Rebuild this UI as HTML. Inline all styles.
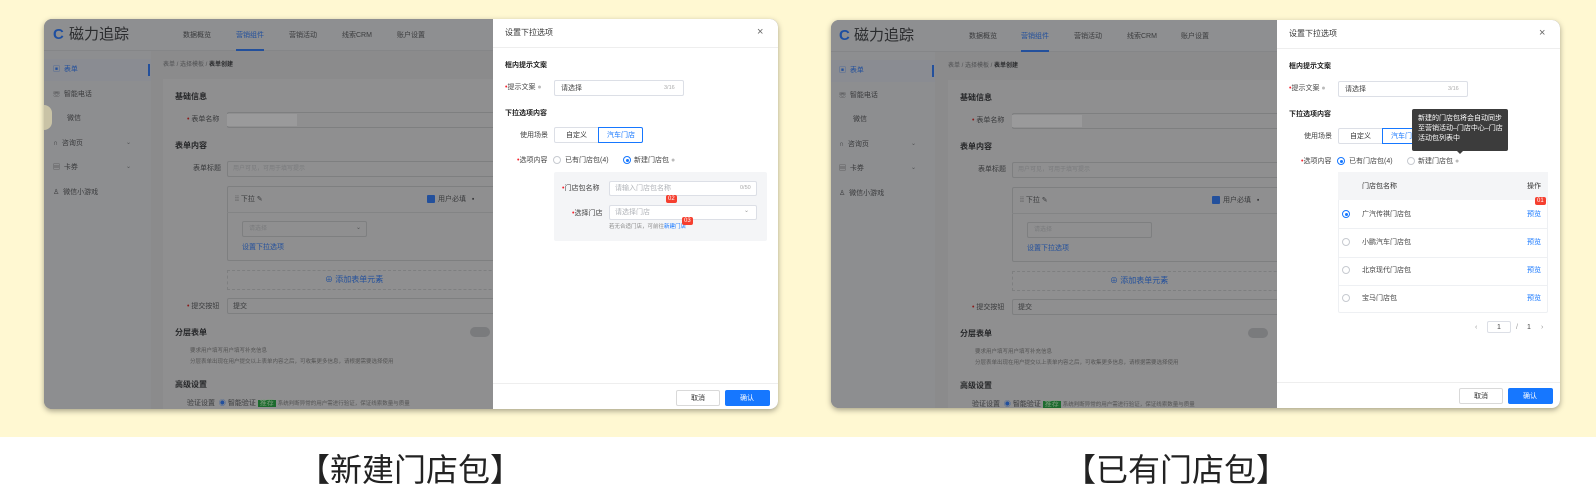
<!DOCTYPE html>
<html><head><meta charset="utf-8">
<style>
*{box-sizing:border-box;margin:0;padding:0}
body{width:1596px;height:503px;background:#fff;position:relative;overflow:hidden;font-family:"Liberation Sans","Noto Sans CJK SC",sans-serif;}
.yel{position:absolute;left:0;top:0;width:1596px;height:437px;background:#fff8d2}
.win{position:absolute;border-radius:8px;overflow:hidden;background:#8b8b8c;box-shadow:0 2px 6px rgba(0,0,0,.35)}
.a{position:absolute;white-space:nowrap;line-height:1}
.hd{position:absolute;left:0;top:0;right:0;height:32px;background:#8e8f91;border-bottom:1px solid #858688}
.sb{position:absolute;left:0;top:32px;width:107px;bottom:0;background:#8d8e90}
.ct{position:absolute;left:119px;top:60px;right:0;bottom:0;background:#8f8f90}
.inp{position:absolute;border:1px solid #7e7f80;border-radius:2px;background:#8f8f90}
.t7{font-size:7px;color:#3a3b3d}
.t6{font-size:6px;color:#505153}
.b8{font-size:8px;font-weight:bold;color:#262729}
.blue{color:#23509c}
.dr{position:absolute;top:0;bottom:0;background:#fff}
.dr .t{font-size:8px;color:#333}
.lbl{font-size:7px;color:#444}
.req{color:#f5222d}
.di{position:absolute;border:1px solid #dcdfe6;border-radius:2px;background:#fff}
.ph{font-size:7px;color:#b0b3b8}
.badge{position:absolute;background:#f53f2f;color:#fff;font-size:6px;padding:1px 2px;border-radius:2px;line-height:1}
.rad{position:absolute;width:8px;height:8px;border:1px solid #c7cad0;border-radius:50%;background:#fff}
.rad.on{border-color:#1677ff}
.rad.on:after{content:"";position:absolute;left:1.5px;top:1.5px;width:3px;height:3px;border-radius:50%;background:#1677ff}
.cap{position:absolute;top:454px;font-size:32px;color:#222;font-family:"Liberation Sans","Noto Sans CJK SC",sans-serif;line-height:1}
</style></head><body>
<div class="yel"></div>

<!-- LEFT WINDOW -->
<div class="win" style="left:44px;top:19px;width:734px;height:390px">
 <div class="hd">
  <div class="a" style="left:9px;top:8px;font-size:15px;color:#1e4fa0;font-weight:bold">C</div>
  <div class="a" style="left:25px;top:8px;font-size:15px;color:#2a2b2d">磁力追踪</div>
  <div class="a t7" style="left:139px;top:13px">数据概览</div>
  <div class="a t7 blue" style="left:192px;top:13px">营销组件</div>
  <div style="position:absolute;left:192px;top:30px;width:28px;height:2px;background:#23509c"></div>
  <div class="a t7" style="left:245px;top:13px">营销活动</div>
  <div class="a t7" style="left:298px;top:13px">线索CRM</div>
  <div class="a t7" style="left:353px;top:13px">账户设置</div>
 </div>
 <div class="sb">
  <div style="position:absolute;left:0;top:8px;width:107px;height:22px;background:#8a8c92"></div>
  <div style="position:absolute;left:104px;top:13px;width:2px;height:12px;background:#23509c"></div>
  <div class="a t7 blue" style="left:9px;top:15px">▣ &nbsp;表单</div>
  <div class="a t7" style="left:9px;top:40px">☏ &nbsp;智能电话</div>
  <div class="a t7" style="left:23px;top:64px">微信</div>
  <div class="a t7" style="left:9px;top:89px">∩ &nbsp;咨询页</div>
  <div class="a t6" style="left:82px;top:89px">⌄</div>
  <div class="a t7" style="left:9px;top:113px">▤ &nbsp;卡券</div>
  <div class="a t6" style="left:82px;top:113px">⌄</div>
  <div class="a t7" style="left:9px;top:138px">♙ &nbsp;微信小游戏</div>
 </div>
 <div style="position:absolute;left:-6px;top:86px;width:14px;height:25px;background:#c9c3a6;border-radius:0 8px 8px 0"></div>
 <div class="a t6" style="left:119px;top:43px">表单 / 选择模板 / <b style="color:#2a2b2d">表单创建</b></div>
 <div class="ct">
  <div class="a b8" style="left:12px;top:14px">基础信息</div>
  <div class="a t7" style="left:24px;top:37px"><span class="req" style="color:#8a1a1a">•</span> 表单名称</div>
  <div class="inp" style="left:64px;top:33px;width:330px;height:16px"></div>
  <div style="position:absolute;left:64px;top:35px;width:70px;height:12px;background:#9a9a9b"></div>
  <div class="a b8" style="left:12px;top:63px">表单内容</div>
  <div class="a t7" style="left:30px;top:86px">表单标题</div>
  <div class="inp" style="left:64px;top:82px;width:330px;height:16px"></div>
  <div class="a t6" style="left:70px;top:87px;color:#7a7b7d">用户可见，可用于填写提示</div>
  <div class="inp" style="left:64px;top:107px;width:330px;height:75px"></div>
  <div class="a t7" style="left:72px;top:117px">⁞⁞ 下拉 ✎</div>
  <div style="position:absolute;left:264px;top:116px;width:8px;height:8px;background:#23509c;border-radius:1px"></div>
  <div class="a t7" style="left:275px;top:117px">用户必填 &nbsp;&nbsp;▪</div>
  <div style="position:absolute;left:64px;top:133px;width:330px;height:1px;background:#838485"></div>
  <div class="inp" style="left:79px;top:142px;width:125px;height:16px"></div>
  <div class="a t6" style="left:86px;top:147px;color:#7a7b7d">请选择</div>
  <div class="a t6" style="left:193px;top:146px">⌄</div>
  <div class="a t7 blue" style="left:79px;top:165px">设置下拉选项</div>
  <div style="position:absolute;left:64px;top:191px;width:330px;height:20px;border:1px dashed #7e7f80"></div>
  <div class="a t7 blue" style="left:162px;top:197px;font-size:8px">⊕ 添加表单元素</div>
  <div class="a t7" style="left:24px;top:224px"><span style="color:#8a1a1a">•</span> 提交按钮</div>
  <div class="inp" style="left:64px;top:219px;width:330px;height:16px"></div>
  <div class="a t7" style="left:70px;top:224px">提交</div>
  <div class="a b8" style="left:12px;top:250px">分层表单</div>
  <div style="position:absolute;left:307px;top:248px;width:20px;height:10px;border-radius:5px;background:#7a7b7d"></div>
  <div class="a" style="left:27px;top:270px;font-size:5.5px;color:#555">要求用户填写用户填写补充信息</div>
  <div class="a" style="left:27px;top:281px;font-size:5.5px;color:#555">分层表单出现在用户提交以上表单内容之后，可收集更多信息，请根据需要选择使用</div>
  <div class="a b8" style="left:12px;top:302px">高级设置</div>
  <div class="a t7" style="left:24px;top:321px">验证设置 &nbsp;<span class="blue">◉</span> 智能验证 <span style="background:#1d6b2e;color:#7a9a7a;padding:0 2px">推荐</span> <span style="font-size:5.5px;color:#555">系统判断异常的用户需进行验证，保证线索数量与质量</span></div>
 </div>
 <!-- drawer -->
 <div class="dr" style="left:449px;width:285px">
  <div class="a t" style="left:12px;top:10px">设置下拉选项</div>
  <div class="a" style="left:264px;top:8px;font-size:11px;color:#666">×</div>
  <div style="position:absolute;left:0;top:28px;width:285px;height:1px;background:#eee"></div>
  <div class="a lbl" style="left:12px;top:43px;font-weight:bold;color:#222">框内提示文案</div>
  <div class="a lbl" style="left:12px;top:65px"><span class="req">•</span>提示文案 <span style="color:#bbb">●</span></div>
  <div class="di" style="left:61px;top:61px;width:130px;height:16px"></div>
  <div class="a lbl" style="left:68px;top:66px">请选择</div>
  <div class="a" style="left:171px;top:67px;font-size:5.5px;color:#aaa">3/16</div>
  <div class="a lbl" style="left:12px;top:91px;font-weight:bold;color:#222">下拉选项内容</div>
  <div class="a lbl" style="left:27px;top:113px">使用场景</div>
  <div class="di" style="left:61px;top:108px;width:45px;height:16px;border-radius:2px 0 0 2px"></div>
  <div class="di" style="left:105px;top:108px;width:45px;height:16px;border-color:#1677ff;border-radius:0 2px 2px 0"></div>
  <div class="a lbl" style="left:73px;top:113px;color:#333">自定义</div>
  <div class="a lbl" style="left:114px;top:113px;color:#1677ff">汽车门店</div>
  <div class="a lbl" style="left:24px;top:138px"><span class="req">•</span>选项内容</div>
  <div class="rad" style="left:60px;top:137px"></div>
  <div class="a lbl" style="left:72px;top:138px">已有门店包(4)</div>
  <div class="rad on" style="left:130px;top:137px"></div>
  <div class="a lbl" style="left:141px;top:138px">新建门店包 <span style="color:#bbb">●</span></div>
  <div style="position:absolute;left:61px;top:153px;width:213px;height:69px;background:#f4f5f7;border-radius:2px"></div>
  <div class="a lbl" style="left:69px;top:166px"><span class="req">•</span>门店包名称</div>
  <div class="di" style="left:116px;top:162px;width:148px;height:15px"></div>
  <div class="a ph" style="left:122px;top:166px">请输入门店包名称</div>
  <div class="a" style="left:247px;top:167px;font-size:5.5px;color:#aaa">0/50</div>
  <div class="a lbl" style="left:79px;top:191px"><span class="req">•</span>选择门店</div>
  <div class="di" style="left:116px;top:186px;width:148px;height:15px"></div>
  <div class="a ph" style="left:122px;top:190px">请选择门店</div>
  <div class="a" style="left:251px;top:189px;font-size:6px;color:#999">⌄</div>
  <div class="a" style="left:116px;top:206px;font-size:5.5px;color:#888">若无合适门店，可前往<span style="color:#1677ff">新建门店</span></div>
  <div class="badge" style="left:173px;top:176px">02</div>
  <div class="badge" style="left:189px;top:198px">03</div>
  <div style="position:absolute;left:0;top:364px;width:285px;height:1px;background:#eee"></div>
  <div class="di" style="left:183px;top:371px;width:44px;height:16px;border-color:#d9d9d9"></div>
  <div class="a lbl" style="left:198px;top:376px;color:#333">取消</div>
  <div style="position:absolute;left:232px;top:371px;width:45px;height:16px;background:#1677ff;border-radius:2px"></div>
  <div class="a lbl" style="left:247px;top:376px;color:#fff">确认</div>
 </div>
</div>

<!-- RIGHT WINDOW -->
<div class="win" style="left:831px;top:20px;width:729px;height:388px">
 <div class="hd">
  <div class="a" style="left:8px;top:8px;font-size:15px;color:#1e4fa0;font-weight:bold">C</div>
  <div class="a" style="left:23px;top:8px;font-size:15px;color:#2a2b2d">磁力追踪</div>
  <div class="a t7" style="left:138px;top:13px">数据概览</div>
  <div class="a t7 blue" style="left:190px;top:13px">营销组件</div>
  <div style="position:absolute;left:190px;top:30px;width:28px;height:2px;background:#23509c"></div>
  <div class="a t7" style="left:243px;top:13px">营销活动</div>
  <div class="a t7" style="left:296px;top:13px">线索CRM</div>
  <div class="a t7" style="left:350px;top:13px">账户设置</div>
 </div>
 <div class="sb" style="width:104px">
  <div style="position:absolute;left:0;top:8px;width:104px;height:22px;background:#8a8c92"></div>
  <div style="position:absolute;left:101px;top:13px;width:2px;height:12px;background:#23509c"></div>
  <div class="a t7 blue" style="left:8px;top:15px">▣ &nbsp;表单</div>
  <div class="a t7" style="left:8px;top:40px">☏ &nbsp;智能电话</div>
  <div class="a t7" style="left:22px;top:64px">微信</div>
  <div class="a t7" style="left:8px;top:89px">∩ &nbsp;咨询页</div>
  <div class="a t6" style="left:80px;top:89px">⌄</div>
  <div class="a t7" style="left:8px;top:113px">▤ &nbsp;卡券</div>
  <div class="a t6" style="left:80px;top:113px">⌄</div>
  <div class="a t7" style="left:8px;top:138px">♙ &nbsp;微信小游戏</div>
 </div>
 <div class="a t6" style="left:117px;top:43px">表单 / 选择模板 / <b style="color:#2a2b2d">表单创建</b></div>
 <div class="ct" style="left:117px">
  <div class="a b8" style="left:12px;top:14px">基础信息</div>
  <div class="a t7" style="left:24px;top:37px"><span style="color:#8a1a1a">•</span> 表单名称</div>
  <div class="inp" style="left:64px;top:33px;width:330px;height:16px"></div>
  <div style="position:absolute;left:64px;top:35px;width:70px;height:12px;background:#9a9a9b"></div>
  <div class="a b8" style="left:12px;top:63px">表单内容</div>
  <div class="a t7" style="left:30px;top:86px">表单标题</div>
  <div class="inp" style="left:64px;top:82px;width:330px;height:16px"></div>
  <div class="a t6" style="left:70px;top:87px;color:#7a7b7d">用户可见，可用于填写提示</div>
  <div class="inp" style="left:64px;top:107px;width:330px;height:75px"></div>
  <div class="a t7" style="left:72px;top:117px">⁞⁞ 下拉 ✎</div>
  <div style="position:absolute;left:264px;top:116px;width:8px;height:8px;background:#23509c;border-radius:1px"></div>
  <div class="a t7" style="left:275px;top:117px">用户必填 &nbsp;&nbsp;▪</div>
  <div style="position:absolute;left:64px;top:133px;width:330px;height:1px;background:#838485"></div>
  <div class="inp" style="left:79px;top:142px;width:125px;height:16px"></div>
  <div class="a t6" style="left:86px;top:147px;color:#7a7b7d">请选择</div>
  <div class="a t7 blue" style="left:79px;top:165px">设置下拉选项</div>
  <div style="position:absolute;left:64px;top:191px;width:330px;height:20px;border:1px dashed #7e7f80"></div>
  <div class="a t7 blue" style="left:162px;top:197px;font-size:8px">⊕ 添加表单元素</div>
  <div class="a t7" style="left:24px;top:224px"><span style="color:#8a1a1a">•</span> 提交按钮</div>
  <div class="inp" style="left:64px;top:219px;width:330px;height:16px"></div>
  <div class="a t7" style="left:70px;top:224px">提交</div>
  <div class="a b8" style="left:12px;top:250px">分层表单</div>
  <div style="position:absolute;left:300px;top:248px;width:20px;height:10px;border-radius:5px;background:#7a7b7d"></div>
  <div class="a" style="left:27px;top:270px;font-size:5.5px;color:#555">要求用户填写用户填写补充信息</div>
  <div class="a" style="left:27px;top:281px;font-size:5.5px;color:#555">分层表单出现在用户提交以上表单内容之后，可收集更多信息，请根据需要选择使用</div>
  <div class="a b8" style="left:12px;top:302px">高级设置</div>
  <div class="a t7" style="left:24px;top:321px">验证设置 &nbsp;<span class="blue">◉</span> 智能验证 <span style="background:#1d6b2e;color:#7a9a7a;padding:0 2px">推荐</span> <span style="font-size:5.5px;color:#555">系统判断异常的用户需进行验证，保证线索数量与质量</span></div>
 </div>
 <div class="dr" style="left:446px;width:283px">
  <div class="a t" style="left:12px;top:10px">设置下拉选项</div>
  <div class="a" style="left:262px;top:8px;font-size:11px;color:#666">×</div>
  <div style="position:absolute;left:0;top:28px;width:283px;height:1px;background:#eee"></div>
  <div class="a lbl" style="left:12px;top:43px;font-weight:bold;color:#222">框内提示文案</div>
  <div class="a lbl" style="left:12px;top:65px"><span class="req">•</span>提示文案 <span style="color:#bbb">●</span></div>
  <div class="di" style="left:61px;top:61px;width:130px;height:16px"></div>
  <div class="a lbl" style="left:68px;top:66px">请选择</div>
  <div class="a" style="left:171px;top:67px;font-size:5.5px;color:#aaa">3/16</div>
  <div class="a lbl" style="left:12px;top:91px;font-weight:bold;color:#222">下拉选项内容</div>
  <div class="a lbl" style="left:27px;top:113px">使用场景</div>
  <div class="di" style="left:61px;top:108px;width:45px;height:16px;border-radius:2px 0 0 2px"></div>
  <div class="di" style="left:105px;top:108px;width:45px;height:16px;border-color:#1677ff;border-radius:0 2px 2px 0"></div>
  <div class="a lbl" style="left:73px;top:113px;color:#333">自定义</div>
  <div class="a lbl" style="left:114px;top:113px;color:#1677ff">汽车门店</div>
  <div class="a lbl" style="left:24px;top:138px"><span class="req">•</span>选项内容</div>
  <div class="rad on" style="left:60px;top:137px"></div>
  <div class="a lbl" style="left:72px;top:138px">已有门店包(4)</div>
  <div class="rad" style="left:130px;top:137px"></div>
  <div class="a lbl" style="left:141px;top:138px">新建门店包 <span style="color:#bbb">●</span></div>
  <div style="position:absolute;left:135px;top:89px;width:96px;height:42px;background:#3c3c3c;border-radius:2px"></div>
  <div style="position:absolute;left:180px;top:131px;width:0;height:0;border-left:3px solid transparent;border-right:3px solid transparent;border-top:3px solid #3c3c3c"></div>
  <div class="a" style="left:141px;top:94px;font-size:7px;color:#fff;line-height:10px;white-space:normal;width:88px">新建的门店包将会自动同步至营销活动–门店中心–门店活动包列表中</div>
  <div style="position:absolute;left:61px;top:152px;width:210px;height:141px;border:1px solid #eef0f3;border-radius:2px"></div>
  <div style="position:absolute;left:61px;top:152px;width:210px;height:28px;background:#f4f5f7"></div>
  <div class="a lbl" style="left:85px;top:163px;color:#333">门店包名称</div>
  <div class="a lbl" style="left:250px;top:163px;color:#333">操作</div>
  <div class="badge" style="left:258px;top:177px">01</div>
  <div class="rad on" style="left:65px;top:190px"></div>
  <div class="a lbl" style="left:85px;top:191px">广汽传祺门店包</div>
  <div class="a lbl" style="left:250px;top:191px;color:#1677ff">预览</div>
  <div style="position:absolute;left:61px;top:208px;width:210px;height:1px;background:#eef0f3"></div>
  <div class="rad" style="left:65px;top:218px"></div>
  <div class="a lbl" style="left:85px;top:219px">小鹏汽车门店包</div>
  <div class="a lbl" style="left:250px;top:219px;color:#1677ff">预览</div>
  <div style="position:absolute;left:61px;top:237px;width:210px;height:1px;background:#eef0f3"></div>
  <div class="rad" style="left:65px;top:246px"></div>
  <div class="a lbl" style="left:85px;top:247px">北京现代门店包</div>
  <div class="a lbl" style="left:250px;top:247px;color:#1677ff">预览</div>
  <div style="position:absolute;left:61px;top:265px;width:210px;height:1px;background:#eef0f3"></div>
  <div class="rad" style="left:65px;top:274px"></div>
  <div class="a lbl" style="left:85px;top:275px">宝马门店包</div>
  <div class="a lbl" style="left:250px;top:275px;color:#1677ff">预览</div>
  <div class="a lbl" style="left:198px;top:304px;color:#999">‹</div>
  <div class="di" style="left:210px;top:301px;width:24px;height:12px"></div>
  <div class="a lbl" style="left:220px;top:304px">1</div>
  <div class="a lbl" style="left:239px;top:304px;color:#999">/</div>
  <div class="a lbl" style="left:250px;top:304px">1</div>
  <div class="a lbl" style="left:264px;top:304px;color:#999">›</div>
  <div style="position:absolute;left:0;top:362px;width:283px;height:1px;background:#eee"></div>
  <div class="di" style="left:182px;top:368px;width:44px;height:16px;border-color:#d9d9d9"></div>
  <div class="a lbl" style="left:197px;top:373px;color:#333">取消</div>
  <div style="position:absolute;left:231px;top:368px;width:45px;height:16px;background:#1677ff;border-radius:2px"></div>
  <div class="a lbl" style="left:246px;top:373px;color:#fff">确认</div>
 </div>
</div>

<div class="cap" style="left:298px">【新建门店包】</div>
<div class="cap" style="left:1064px">【已有门店包】</div>
</body></html>
